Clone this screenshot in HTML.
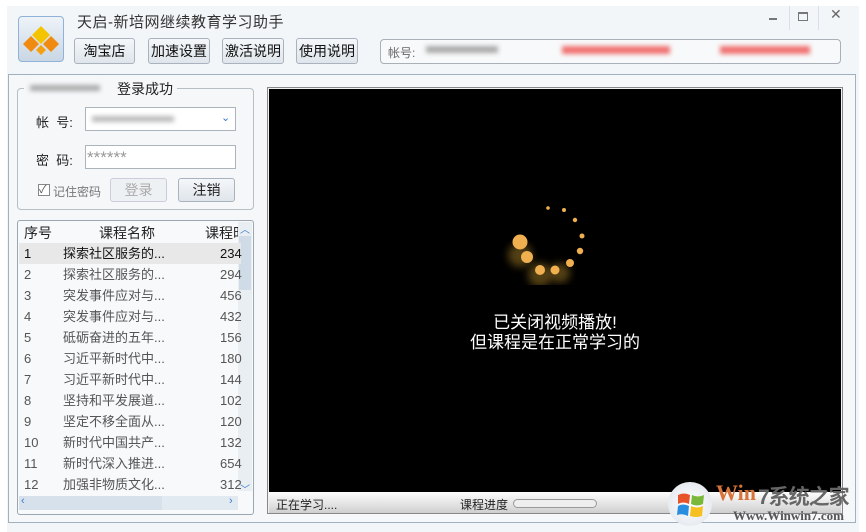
<!DOCTYPE html>
<html><head><meta charset="utf-8"><style>
*{margin:0;padding:0;box-sizing:border-box}
body{width:866px;height:532px;background:#fff;position:relative;overflow:hidden;font-family:"Liberation Sans","Noto Sans CJK SC",sans-serif;font-size:13px;color:#222}
.win{position:absolute;left:7px;top:6px;width:852px;height:526px;background:#f3f6f9}
.abs{position:absolute;white-space:nowrap}
.btn{position:absolute;top:38px;height:26px;border:1px solid #a9b3be;border-radius:3px;background:linear-gradient(#f4f7fa,#dfe5eb);font-size:14px;text-align:center;line-height:24px;color:#111}
.blur{filter:blur(2.5px);position:absolute}
.row{position:absolute;left:19px;width:222px;height:21px;line-height:21px;font-size:13px;color:#555}
.row span{position:absolute}
</style></head><body>
<div class="win"></div>
<div class="abs" style="left:18px;top:16px;width:46px;height:46px;border:1px solid #8fb3d8;border-radius:4px;background:linear-gradient(#eef3f8,#c9d6e4)">
<svg width="44" height="44" viewBox="0 0 44 44"><polygon points="22,9 31,18 22,27 13,18" fill="#f5c400"/><polygon points="12,19 20,27 12,35 4,27" fill="#f08a10"/><polygon points="32,19 40,27 32,35 24,27" fill="#f08a10"/><polygon points="22,28 27,33 22,38 17,33" fill="#f4a010"/></svg></div>
<div class="abs" style="left:77px;top:11px;font-size:15px;color:#333;letter-spacing:0.5px">天启-新培网继续教育学习助手</div>
<div class="btn" style="left:74px;width:61px">淘宝店</div>
<div class="btn" style="left:148px;width:62px">加速设置</div>
<div class="btn" style="left:222px;width:62px">激活说明</div>
<div class="btn" style="left:296px;width:62px">使用说明</div>
<div class="abs" style="left:380px;top:39px;width:461px;height:25px;border:1px solid #a9b0b8;border-radius:4px;background:#f8f9fa"></div>
<div class="abs" style="left:388px;top:44px;font-size:12px;color:#666">帐号:</div>
<div class="blur" style="left:426px;top:46px;width:72px;height:7px;background:#aaa"></div>
<div class="blur" style="left:562px;top:46px;width:108px;height:8px;background:#f07070"></div>
<div class="blur" style="left:720px;top:46px;width:90px;height:8px;background:#f07070"></div>
<div class="abs" style="left:769px;top:18px;width:8px;height:1.5px;background:#777"></div>
<div class="abs" style="left:789px;top:6px;width:1px;height:24px;background:#dde"></div>
<div class="abs" style="left:798px;top:12px;width:10px;height:9px;border:1px solid #777;border-top-width:2px"></div>
<div class="abs" style="left:818px;top:6px;width:1px;height:24px;background:#dde"></div>
<div class="abs" style="left:830px;top:6px;font-size:14px;color:#666">✕</div>
<div class="abs" style="left:8px;top:74px;width:848px;height:449px;border:1px solid #9fb0bf;background:#f5f7f9"></div>
<div class="abs" style="left:17px;top:88px;width:237px;height:122px;border:1px solid #b6bec6;border-radius:4px"></div>
<div class="abs" style="left:24px;top:80px;width:153px;height:16px;background:#f5f7f9"></div>
<div class="blur" style="left:30px;top:85px;width:70px;height:6px;background:#aaa"></div>
<div class="abs" style="left:117px;top:79px;font-size:14px">登录成功</div>
<div class="abs" style="left:36px;top:112px;font-size:13px">帐&nbsp;&nbsp;号:</div>
<div class="abs" style="left:85px;top:107px;width:151px;height:24px;border:1px solid #abb3bb;background:#fff"></div>
<div class="blur" style="left:92px;top:116px;width:82px;height:6px;background:#bbb"></div>
<div class="abs" style="left:221px;top:111px;font-size:11px;color:#3a7bc8">&#8964;</div>
<div class="abs" style="left:36px;top:150px;font-size:13px">密&nbsp;&nbsp;码:</div>
<div class="abs" style="left:85px;top:145px;width:151px;height:24px;border:1px solid #abb3bb;background:#fff;color:#999;font-size:17px;padding-left:1px;line-height:24px">******</div>
<div class="abs" style="left:38px;top:184px;width:12px;height:12px;border:1px solid #888;background:#fff;font-size:11px;line-height:10px;color:#555">✓</div>
<div class="abs" style="left:53px;top:183px;font-size:12px;color:#777">记住密码</div>
<div class="abs" style="left:110px;top:178px;width:57px;height:24px;border:1px solid #ccd;border-radius:3px;background:#eef1f4;color:#aaa;text-align:center;line-height:22px;font-size:14px">登录</div>
<div class="abs" style="left:178px;top:178px;width:57px;height:24px;border:1px solid #a9b3be;border-radius:3px;background:linear-gradient(#f4f7fa,#dfe5eb);text-align:center;line-height:22px;font-size:14px">注销</div>
<div class="abs" style="left:17px;top:220px;width:237px;height:295px;border:1px solid #9aa6b2;border-radius:3px;background:#f7f9fb"></div>
<div class="abs" style="left:24px;top:223px;font-size:14px">序号</div>
<div class="abs" style="left:99px;top:223px;font-size:14px">课程名称</div>
<div class="abs" style="left:205px;top:223px;font-size:14px;width:33px;overflow:hidden">课程时</div>
<div class="abs" style="left:238px;top:222px;width:14px;height:269px;background:#e9eef3"></div>
<div class="abs" style="left:239px;top:236px;width:12px;height:54px;background:#cfdbe7"></div>
<div class="abs" style="left:240px;top:221px;font-size:10px;color:#3a7bc8">︿</div>
<div class="abs" style="left:240px;top:481px;font-size:10px;color:#3a7bc8">﹀</div>
<div class="abs" style="left:19px;top:496px;width:219px;height:14px;background:#e1e9f1"></div>
<div class="abs" style="left:19px;top:496px;width:143px;height:14px;background:#d6e1ec"></div>
<div class="abs" style="left:21px;top:495px;font-size:11px;color:#3a7bc8">‹</div>
<div class="abs" style="left:229px;top:495px;font-size:11px;color:#3a7bc8">›</div>
<div class="row" style="top:243px;background:#e8e8e8;color:#111"><span style="left:5px">1</span><span style="left:44px">探索社区服务的...</span><span style="left:201px">234</span></div>
<div class="row" style="top:264px"><span style="left:5px">2</span><span style="left:44px">探索社区服务的...</span><span style="left:201px">294</span></div>
<div class="row" style="top:285px"><span style="left:5px">3</span><span style="left:44px">突发事件应对与...</span><span style="left:201px">456</span></div>
<div class="row" style="top:306px"><span style="left:5px">4</span><span style="left:44px">突发事件应对与...</span><span style="left:201px">432</span></div>
<div class="row" style="top:327px"><span style="left:5px">5</span><span style="left:44px">砥砺奋进的五年...</span><span style="left:201px">156</span></div>
<div class="row" style="top:348px"><span style="left:5px">6</span><span style="left:44px">习近平新时代中...</span><span style="left:201px">180</span></div>
<div class="row" style="top:369px"><span style="left:5px">7</span><span style="left:44px">习近平新时代中...</span><span style="left:201px">144</span></div>
<div class="row" style="top:390px"><span style="left:5px">8</span><span style="left:44px">坚持和平发展道...</span><span style="left:201px">102</span></div>
<div class="row" style="top:411px"><span style="left:5px">9</span><span style="left:44px">坚定不移全面从...</span><span style="left:201px">120</span></div>
<div class="row" style="top:432px"><span style="left:5px">10</span><span style="left:44px">新时代中国共产...</span><span style="left:201px">132</span></div>
<div class="row" style="top:453px"><span style="left:5px">11</span><span style="left:44px">新时代深入推进...</span><span style="left:201px">654</span></div>
<div class="row" style="top:474px;height:20px;overflow:hidden"><span style="left:5px">12</span><span style="left:44px">加强非物质文化...</span><span style="left:201px">312</span></div>
<div class="abs" style="left:267px;top:87px;width:576px;height:427px;border:1px solid #888;background:#f0f0f0"></div>
<div class="abs" style="left:269px;top:89px;width:572px;height:403px;background:#000"></div>
<svg class="abs" style="left:490px;top:195px" width="110" height="90">
<defs><filter id="b"><feGaussianBlur stdDeviation="4"/></filter></defs>
<g filter="url(#b)" fill="#8a6a20" opacity="0.6"><circle cx="30" cy="60" r="12"/><circle cx="50" cy="80" r="12"/><circle cx="70" cy="78" r="10"/></g>
<g fill="#f0b050"><circle cx="30" cy="47" r="7.5"/><circle cx="37" cy="62" r="6"/><circle cx="50" cy="75" r="5"/><circle cx="65" cy="75" r="4.5"/><circle cx="80" cy="68" r="4"/><circle cx="90" cy="56" r="3.2"/><circle cx="92" cy="41" r="2.5"/><circle cx="85" cy="25" r="2.2"/><circle cx="74" cy="15" r="2"/><circle cx="58" cy="13" r="1.8"/></g>
</svg>
<div class="abs" style="left:269px;top:313px;text-align:center;width:572px;color:#fff;font-size:17px;line-height:20px">已关闭视频播放!<br>但课程是在正常学习的</div>
<div class="abs" style="left:269px;top:492px;width:572px;height:21px;background:linear-gradient(#fdfdfd,#e2e2e2 60%,#cfcfcf)"></div>
<div class="abs" style="left:276px;top:496px;font-size:12px">正在学习....</div>
<div class="abs" style="left:460px;top:496px;font-size:12px">课程进度</div>
<div class="abs" style="left:513px;top:499px;width:84px;height:9px;border:1px solid #999;border-radius:5px;background:#eee"></div>
<div class="abs" style="left:668px;top:482px;width:44px;height:44px;border-radius:50%;background:radial-gradient(#fff,#dde3ea)"></div>
<svg class="abs" style="left:676px;top:490px" width="30" height="30"><path d="M2 5 Q8 2 14 5 L13 14 Q7 11 2 14Z" fill="#e8542a"/><path d="M16 5 Q22 8 28 5 L27 14 Q21 17 15 14Z" fill="#7ab83a"/><path d="M2 16 Q7 13 13 16 L12 26 Q6 23 1 25Z" fill="#2a8ee0"/><path d="M15 16 Q21 19 27 16 L26 26 Q20 28 14 26Z" fill="#f5c020"/></svg>
<div class="abs" style="left:716px;top:480px;font-family:'Liberation Serif',serif;font-weight:bold;font-size:22px;color:#d8743a">Win</div>
<div class="abs" style="left:758px;top:481px;font-size:21px;color:#666;font-weight:bold;letter-spacing:-1px">7系统之家</div>
<div class="abs" style="left:733px;top:508px;font-family:'Liberation Serif',serif;font-weight:bold;font-size:13px;color:#555">Www.Winwin7.com</div>
</body></html>
